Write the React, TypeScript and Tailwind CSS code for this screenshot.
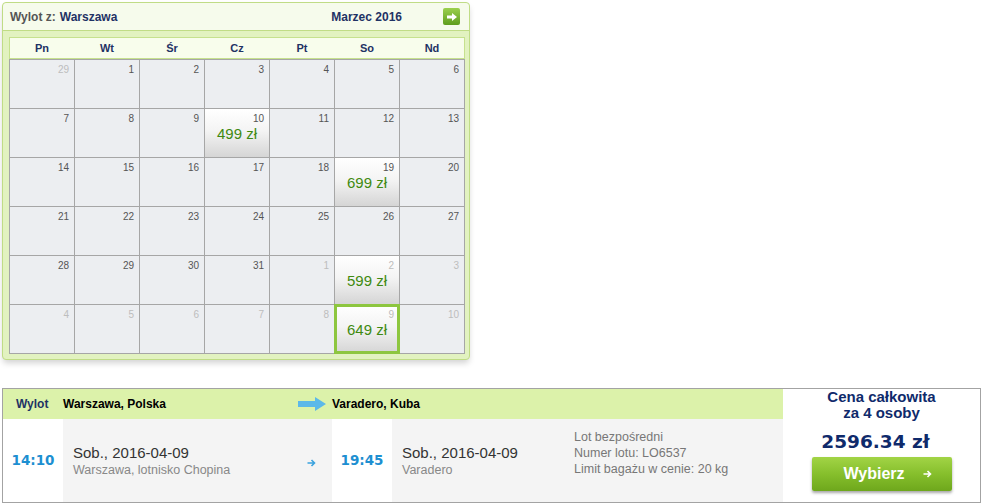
import React from 'react';

type Day = { n: number; out?: boolean; price?: number; selected?: boolean };

const WEEKDAYS = ['Pn', 'Wt', 'Śr', 'Cz', 'Pt', 'So', 'Nd'];

const WEEKS: Day[][] = [
  [{ n: 29, out: true }, { n: 1 }, { n: 2 }, { n: 3 }, { n: 4 }, { n: 5 }, { n: 6 }],
  [{ n: 7 }, { n: 8 }, { n: 9 }, { n: 10, price: 499 }, { n: 11 }, { n: 12 }, { n: 13 }],
  [{ n: 14 }, { n: 15 }, { n: 16 }, { n: 17 }, { n: 18 }, { n: 19, price: 699 }, { n: 20 }],
  [{ n: 21 }, { n: 22 }, { n: 23 }, { n: 24 }, { n: 25 }, { n: 26 }, { n: 27 }],
  [
    { n: 28 },
    { n: 29 },
    { n: 30 },
    { n: 31 },
    { n: 1, out: true },
    { n: 2, out: true, price: 599 },
    { n: 3, out: true },
  ],
  [
    { n: 4, out: true },
    { n: 5, out: true },
    { n: 6, out: true },
    { n: 7, out: true },
    { n: 8, out: true },
    { n: 9, out: true, price: 649, selected: true },
    { n: 10, out: true },
  ],
];

function SmallArrow({ className = '' }: { className?: string }) {
  return (
    <svg width="9" height="8" viewBox="0 0 9 8" className={className}>
      <path d="M0.5 4h7M4.5 1l3 3-3 3" fill="none" stroke="currentColor" strokeWidth="1.6" />
    </svg>
  );
}

function DayCell({ day }: { day: Day }) {
  return (
    <div
      className={`relative h-[48px] ${
        day.price
          ? 'bg-[linear-gradient(to_bottom,#ffffff_0%,#f4f4f4_45%,#d5d5d5_100%)]'
          : 'bg-[#eceef1]'
      }`}
    >
      <div
        className={`pr-[5px] pt-[4px] text-right text-[10px] leading-[12px] ${
          day.out ? 'text-[#bdbdbd]' : 'text-[#555]'
        }`}
      >
        {day.n}
      </div>
      {day.price && (
        <div className="text-center text-[15px] leading-[18px] text-[#3f8a10]">{day.price} zł</div>
      )}
      {day.selected && <div className="absolute -inset-px border-[3px] border-[#8dc63f]" />}
    </div>
  );
}

function Calendar() {
  return (
    <div className="ml-[2px] mt-[2px] w-[468px] rounded-[4px] border border-[#c0dc86] bg-[#e2f2c0] pb-[5px] pl-[6px] pr-[4px] shadow-[0_4px_6px_-1px_rgba(0,0,0,0.18)]">
      <div className="-ml-[6px] -mr-[4px] flex h-[28px] items-center rounded-t-[4px] border-b border-[#c0dc86] bg-[#f6fbec] pl-[7px] pr-[9px] text-[12px] font-bold">
        <span className="text-[#555]">Wylot z:</span>
        <span className="ml-[4px] text-[#1f3264]">Warszawa</span>
        <span className="ml-auto mr-[41px] text-[#1f3264]">Marzec 2016</span>
        <button className="flex h-[17px] w-[17px] items-center justify-center rounded-[2px] bg-[linear-gradient(to_bottom,#9bd04e,#5f9d1e)]">
          <svg width="10" height="8" viewBox="0 0 10 8">
            <path d="M0 2.6h5V0l5 4-5 4V5.4H0z" fill="#fff" />
          </svg>
        </button>
      </div>
      <div className="mt-[6px] grid h-[22px] grid-cols-[repeat(7,64px)] gap-px border border-[#c6e18e] bg-[#f8fdec]">
        {WEEKDAYS.map(d => (
          <div key={d} className="flex items-center justify-center text-[11px] font-bold text-[#1f3264]">
            {d}
          </div>
        ))}
      </div>
      <div className="grid w-[456px] grid-cols-[repeat(7,64px)] gap-px bg-[#a6a6a6] p-px">
        {WEEKS.flat().map((day, i) => (
          <DayCell key={i} day={day} />
        ))}
      </div>
    </div>
  );
}

function FlightRow() {
  return (
    <div className="ml-[2px] mt-[28px] flex h-[115px] w-[979px] border border-[#a3a3a3]">
      <div className="flex flex-1 flex-col">
        <div className="flex h-[30px] items-center bg-[#dcf2aa] text-[12px] font-bold">
          <div className="w-[60px] pl-[13px] text-[#1f3264]">Wylot</div>
          <div className="flex w-[269px] items-center pr-[6px] text-black">
            <span>Warszawa, Polska</span>
            <svg width="28" height="14" viewBox="0 0 28 14" className="ml-auto">
              <path d="M0 4h17V0l11 7-11 7v-4H0z" fill="#5cb9e9" />
            </svg>
          </div>
          <div className="text-black">Varadero, Kuba</div>
        </div>
        <div className="flex flex-1">
          <div className="flex w-[60px] items-center justify-center bg-white font-['DejaVu_Sans',sans-serif] text-[13.5px] font-bold text-[#1d8fd1]">
            14:10
          </div>
          <div className="flex w-[269px] items-center bg-[#f4f4f4] pl-[10px] pr-[16px]">
            <div>
              <div className="text-[15px] leading-[18px] text-[#333]">Sob., 2016-04-09</div>
              <div className="text-[12.5px] leading-[16px] text-[#888]">Warszawa, lotnisko Chopina</div>
            </div>
            <SmallArrow className="ml-auto mt-[4px] text-[#3aa2de]" />
          </div>
          <div className="flex w-[60px] items-center justify-center bg-white font-['DejaVu_Sans',sans-serif] text-[13.5px] font-bold text-[#1d8fd1]">
            19:45
          </div>
          <div className="flex flex-1 bg-[#f4f4f4]">
            <div className="flex w-[182px] items-center pl-[10px]">
              <div>
                <div className="text-[15px] leading-[18px] text-[#333]">Sob., 2016-04-09</div>
                <div className="text-[12.5px] leading-[16px] text-[#888]">Varadero</div>
              </div>
            </div>
            <div className="pt-[10px] text-[12.5px] leading-[16px] text-[#777]">
              <div>Lot bezpośredni</div>
              <div>Numer lotu: LO6537</div>
              <div>Limit bagażu w cenie: 20 kg</div>
            </div>
          </div>
        </div>
      </div>
      <div className="flex w-[197px] flex-col items-center bg-white text-[#0f2a6b]">
        <div className="text-center text-[15px] font-bold leading-[16px]">
          <div>Cena całkowita</div>
          <div>za 4 osoby</div>
        </div>
        <div className="mt-[9px] pr-[12px] font-['DejaVu_Sans',sans-serif] text-[18.5px] font-bold leading-[24px]">
          2596.34 zł
        </div>
        <button className="mt-[3px] flex h-[34px] w-[140px] items-center justify-center gap-[18px] rounded-[2px] bg-[linear-gradient(to_bottom,#a2d446,#86bf2c_50%,#6ea71c)] pl-[12px] text-[16px] font-bold text-white shadow-[0_2px_3px_rgba(0,0,0,0.35)]">
          <span>Wybierz</span>
          <SmallArrow className="text-white" />
        </button>
      </div>
    </div>
  );
}

export default function App() {
  return (
    <div className="h-[504px] w-[983px] overflow-hidden bg-white font-['Liberation_Sans',Arial,sans-serif]">
      <Calendar />
      <FlightRow />
    </div>
  );
}
